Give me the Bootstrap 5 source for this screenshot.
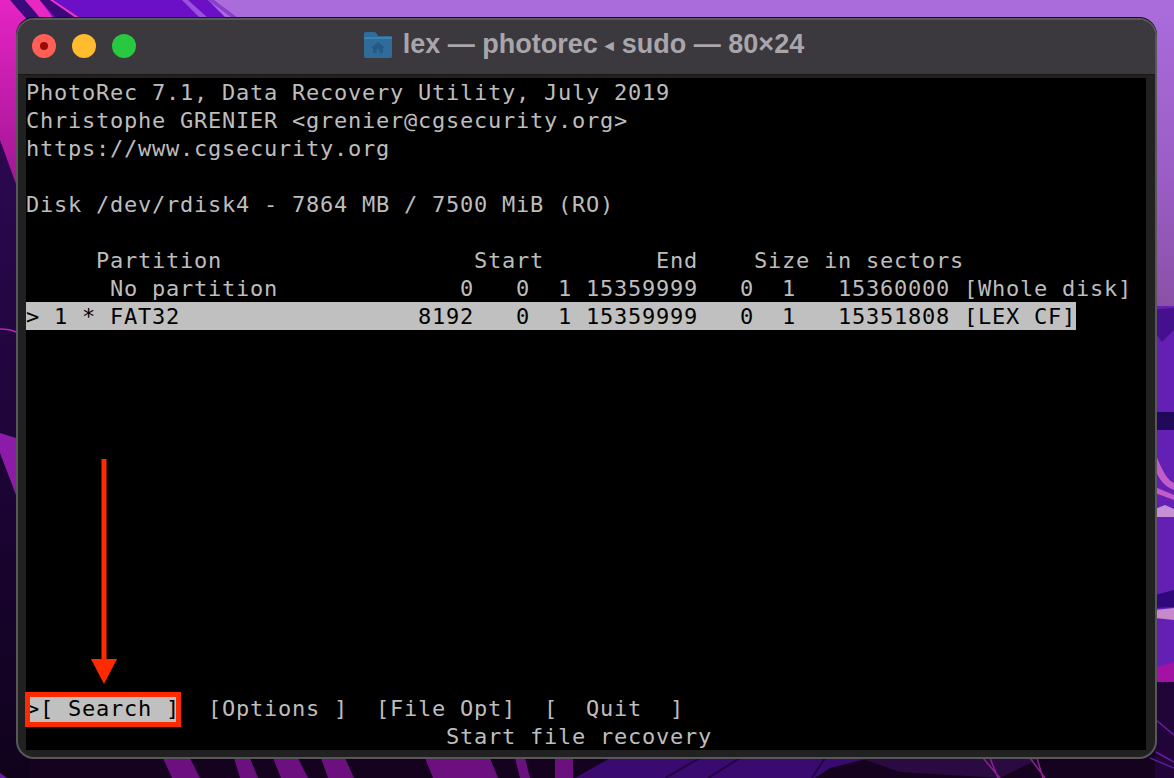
<!DOCTYPE html>
<html lang="en">
<head>
<meta charset="utf-8">
<title>lex — photorec ◂ sudo — 80×24</title>
<link href="https://cdn.jsdelivr.net/npm/bootstrap@5.3.0/dist/css/bootstrap.min.css" rel="stylesheet">
<style>
html,body{height:778px;overflow:hidden;background:#14021f}
.wall{position:absolute;left:0;top:0;width:1174px;height:778px;z-index:0}
.stage{width:1174px;height:778px;padding:18px 17px 19px 16px;z-index:1}
.term-win{width:1141px;height:741px;background:#212121;border:2px solid #585858;border-radius:18px;box-shadow:0 -1px 0 #0c0a10;overflow:hidden}
.term-bar{height:55px;background:#3b383e;border-bottom:1px solid #18171a;display:grid;grid-template-columns:1fr auto 1fr;align-items:center;padding:0 19px 2px 14px}
.dot-btn{width:24px;height:24px;border-radius:50%}
.dot-red{background:#ff5f57}
.dot-red::after{content:"";width:8px;height:8px;border-radius:50%;background:#990c02}
.dot-yel{background:#febc2e}
.dot-grn{background:#28c840}
.term-title{font:700 27px/30px "Liberation Sans",Arial,sans-serif;color:#a9a6ab;white-space:nowrap;gap:11px;margin-bottom:2px}
.term-title svg{display:block}
.title-tri{font-size:17px;vertical-align:2px}
.term-frame{padding:3px 9px 0 8px}
.term-screen{width:1120px;height:672px;background:#000;position:relative}
.term-text{font:400 22px/28px "DejaVu Sans Mono",monospace;letter-spacing:.756px;color:#bdbdbd}
.term-row{height:28px;padding-top:1px;white-space:pre}
.hl{display:inline-block;height:28px;margin-top:-1px;padding-top:1px;background:#c0c0c0;color:#000;vertical-align:top}
.red-box{position:absolute;left:-1px;top:614px;width:156px;height:35px;border:5px solid #ff2a00}
.red-arrow{position:absolute;left:65px;top:381px}
</style>
</head>
<body class="position-relative">
<svg class="wall" viewBox="0 0 1174 778" xmlns="http://www.w3.org/2000/svg" aria-hidden="true">
<defs>
<linearGradient id="lil" x1="0" y1="0" x2="0" y2="1"><stop offset="0" stop-color="#ab6cdc"/><stop offset=".6" stop-color="#9a5cc4"/><stop offset="1" stop-color="#8a50a6"/></linearGradient>
<linearGradient id="mag" x1="0" y1="0" x2="0" y2="1"><stop offset="0" stop-color="#e524c4"/><stop offset="1" stop-color="#9c1590"/></linearGradient>
<linearGradient id="drk" x1="0" y1="0" x2="0" y2="1"><stop offset="0" stop-color="#2c0850"/><stop offset=".55" stop-color="#1c0434"/><stop offset="1" stop-color="#10021c"/></linearGradient>
</defs>
<rect width="1174" height="778" fill="#14021f"/>
<rect x="0" y="140" width="30" height="638" fill="url(#drk)"/>
<polygon points="0,0 30,0 30,200 16,184 0,140" fill="url(#mag)"/>
<polygon points="10,0 25,0 50,30 36,30" fill="#3a0a7c"/>
<polygon points="25,0 40,0 64,30 50,30" fill="#e828c0"/>
<polygon points="40,0 240,0 240,30 62,30" fill="#6c10c8"/>
<polygon points="40,0 50,0 76,18 56,18" fill="#3d0878"/>
<polygon points="50,0 53,0 80,18 76,18" fill="#ee38c4"/>
<polygon points="182,0 188,0 208,18 200,18" fill="#9a50dc"/>
<polygon points="208,0 1174,0 1174,310 1150,310 1150,30 238,30" fill="url(#lil)"/>
<polygon points="208,0 214,0 238,18 232,18" fill="#8a3ed0"/>
<path d="M0 329 Q10 329 16 332" stroke="#b028b0" stroke-width="1.6" fill="none"/>
<polygon points="0,433 16,438 16,495 0,453" fill="#8c1ca8"/>
<rect x="1150" y="306" width="24" height="375" fill="#6420b4"/>
<polygon points="1150,310 1174,308 1174,330 1162,342 1150,325" fill="#44108e"/>
<rect x="1150" y="412" width="24" height="18" fill="#22085a"/>
<path d="M1155 452 Q1165 480 1174 483 L1174 490 Q1160 485 1155 468Z" fill="#c25cc8"/>
<polygon points="1155,487 1174,495 1174,500 1155,493" fill="#c25cc8"/>
<polygon points="1155,509 1165,505 1174,509 1174,517 1155,517" fill="#c890d4"/>
<polygon points="1155,595 1174,590 1174,607 1155,608" fill="#30087c"/>
<polygon points="1155,610 1174,608 1174,620 1155,618" fill="#c888cc"/>
<polygon points="1155,668 1174,662 1174,684 1155,682" fill="#a412a4"/>
<rect x="1155" y="682" width="19" height="96" fill="#220538"/>
<path d="M1156 720 L1174 735 M1156 752 L1174 762" stroke="#6a1ca8" stroke-width="1.5"/>
<g fill="#6c1080">
<polygon points="163,758 190,758 200,778 172,778"/>
<polygon points="234,758 250,758 258,778 240,778"/>
<polygon points="273,758 298,758 308,778 281,778"/>
<polygon points="321,758 345,758 354,778 328,778"/>
<polygon points="425,758 490,758 498,778 433,778"/>
<polygon points="515,758 525,758 530,778 520,778"/>
<polygon points="555,758 573,758 573,778 555,778"/>
</g>
<polygon points="0,778 7,778 0,773" fill="#6a18a8"/>
<polygon points="575,778 610,758 870,758 830,768 815,778" fill="#3a0a70"/>
<path d="M665 778 L700 758 M708 778 L740 758 M812 778 L825 758" stroke="#200545" stroke-width="2"/>
<polygon points="860,758 1040,758 1000,778 900,772" fill="#2a0a40"/>
<path d="M983 758 L1000 778 M990 758 L998 778 M1030 758 L1045 778 M1037 758 L1043 778" stroke="#8c2090" stroke-width="1.5"/>
<path d="M1150 758 L1174 768" stroke="#5a1c98" stroke-width="1.5"/>
</svg>

<main class="stage position-relative">
<section class="term-win d-flex flex-column">
<header class="term-bar flex-shrink-0">
<div class="d-flex gap-3">
<span class="dot-btn dot-red d-flex align-items-center justify-content-center"></span>
<span class="dot-btn dot-yel"></span>
<span class="dot-btn dot-grn"></span>
</div>
<div class="term-title d-flex align-items-center">
<svg width="28" height="26" viewBox="0 0 28 26" aria-hidden="true">
<path d="M0 2Q0 0 2 0H10Q12 0 13 2L14 4H27Q28 4 28 5.500V24.500Q28 26 26.500 26H1.500Q0 26 0 24.500Z" fill="#2f6c9c"/>
<path d="M0 5H28V7H0Z" fill="#3b7fb3"/>
<path d="M14 10L21 16H19V21H15.500V17.500H12.500V21H9V16H7Z" fill="#235a86"/>
</svg>
<span>lex — photorec <span class="title-tri">◂</span> sudo — 80×24</span>
</div>
<div></div>
</header>
<div class="term-frame flex-grow-1">
<div class="term-screen">
<div class="term-text">
<div class="term-row">PhotoRec 7.1, Data Recovery Utility, July 2019</div>
<div class="term-row">Christophe GRENIER &lt;grenier@cgsecurity.org&gt;</div>
<div class="term-row">https://www.cgsecurity.org</div>
<div class="term-row"></div>
<div class="term-row">Disk /dev/rdisk4 - 7864 MB / 7500 MiB (RO)</div>
<div class="term-row"></div>
<div class="term-row">     Partition                  Start        End    Size in sectors</div>
<div class="term-row">      No partition             0   0  1 15359999   0  1   15360000 [Whole disk]</div>
<div class="term-row"><span class="hl">&gt; 1 * FAT32                 8192   0  1 15359999   0  1   15351808 [LEX CF]</span></div>
<div class="term-row"></div>
<div class="term-row"></div>
<div class="term-row"></div>
<div class="term-row"></div>
<div class="term-row"></div>
<div class="term-row"></div>
<div class="term-row"></div>
<div class="term-row"></div>
<div class="term-row"></div>
<div class="term-row"></div>
<div class="term-row"></div>
<div class="term-row"></div>
<div class="term-row"></div>
<div class="term-row"><span class="hl">&gt;[ Search ]</span>  [Options ]  [File Opt]  [  Quit  ]</div>
<div class="term-row">                              Start file recovery</div>
</div>
<div class="red-box"></div>
<svg class="red-arrow" width="26" height="226" viewBox="0 0 26 226" aria-hidden="true">
<rect x="10.500" y="0" width="5" height="202" fill="#ff2a00"/>
<polygon points="0,200 26,200 13,225" fill="#ff2a00"/>
</svg>
</div>
</div>
</section>
</main>
<script src="https://cdn.jsdelivr.net/npm/bootstrap@5.3.0/dist/js/bootstrap.bundle.min.js"></script>
</body>
</html>
